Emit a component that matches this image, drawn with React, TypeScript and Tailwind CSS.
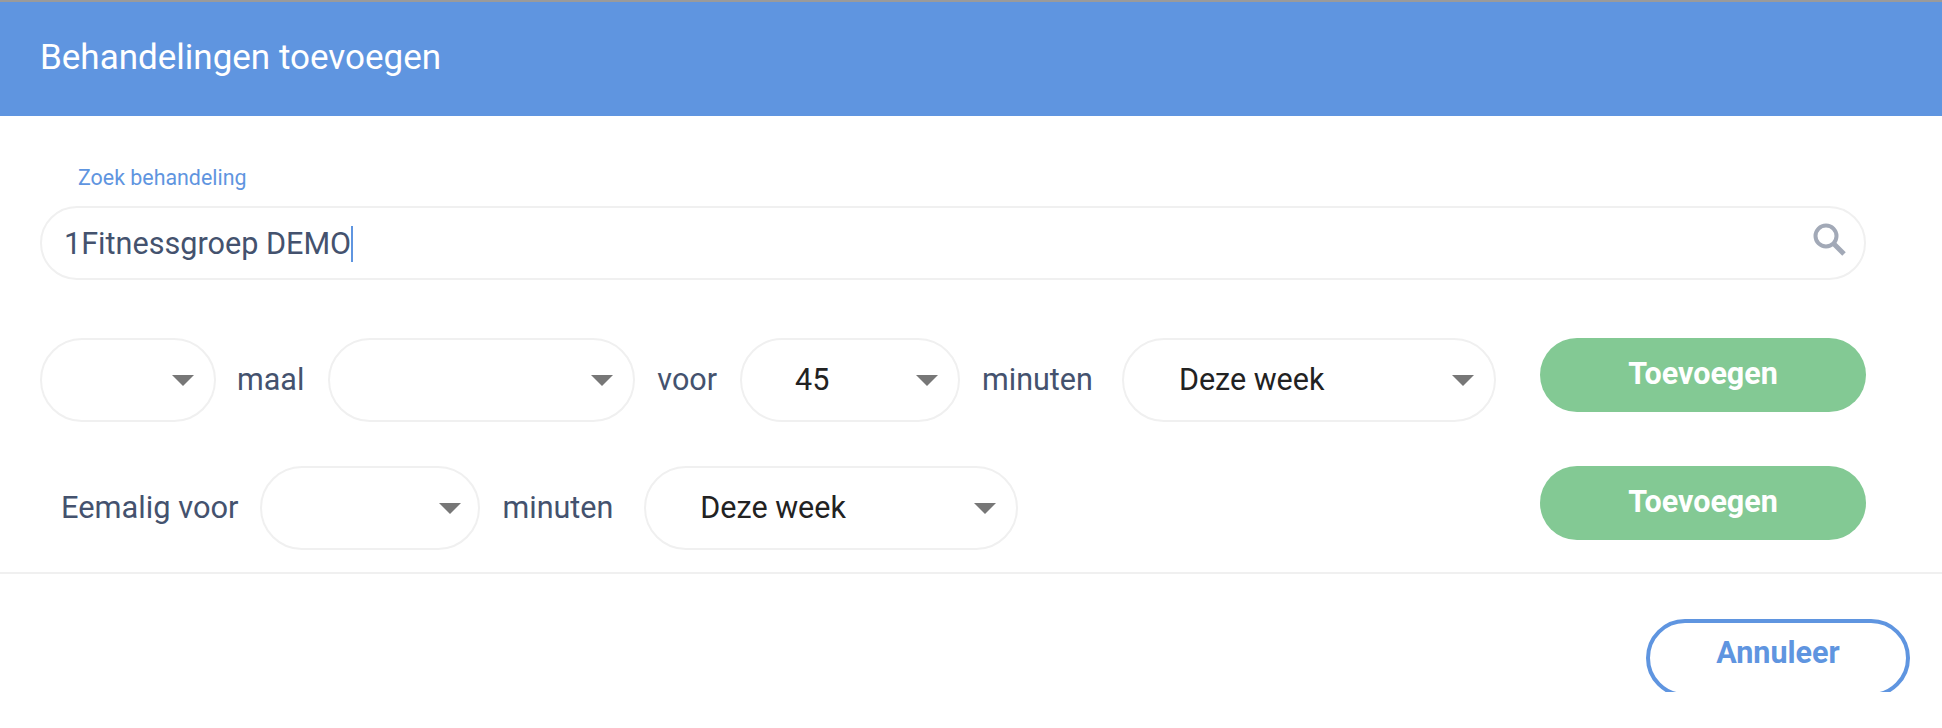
import React from "react";

function Caret() {
  return (
    <svg width="22" height="11" viewBox="0 0 22 11" className="shrink-0">
      <path d="M0 0H22L11 11Z" fill="#777777" />
    </svg>
  );
}

function Select({ className, value }: { className: string; value?: string }) {
  return (
    <div className={`h-[84px] shrink-0 rounded-[42px] border-2 border-[#f0f0f0] bg-white flex items-center justify-between ${className}`}>
      <span className="text-[30.5px] text-[#222222]">{value}</span>
      <Caret />
    </div>
  );
}

function Label({ children, className }: { children: React.ReactNode; className: string }) {
  return <span className={`h-[84px] flex items-center shrink-0 text-[30.5px] text-[#44526e] ${className}`}>{children}</span>;
}

function AddButton() {
  return (
    <button className="ml-auto w-[326px] h-[74px] rounded-[37px] bg-[#83c994] text-white text-[30.5px] font-bold pb-[2px]">
      Toevoegen
    </button>
  );
}

export default function App() {
  return (
    <div className="w-[1942px] h-[728px] bg-white overflow-hidden font-['Roboto',sans-serif]">
      <div className="h-[2px] bg-[#9a9a9a]" />
      <header className="h-[114px] bg-[#5f95e0] flex items-center pl-[40px]">
        <h1 className="text-[35px] font-normal text-white pb-[2px]">Behandelingen toevoegen</h1>
      </header>

      <main className="pl-[40px] pr-[76px]">
        <label className="block pl-[38px] pt-[48px] h-[90px] text-[21.4px] leading-[28px] text-[#5f95e0]">Zoek behandeling</label>
        <div className="h-[74px] rounded-[37px] border-2 border-[#f0f0f0] flex items-center justify-between pl-[22px] pr-[16px]">
          <div className="flex items-center text-[30.6px] text-[#44526e] pt-[2px]">
            <span>1Fitnessgroep DEMO</span>
            <span className="w-[2px] h-[36px] bg-[#5f95e0]" />
          </div>
          <svg width="36" height="36" viewBox="0 0 36 36" className="shrink-0 mb-[7px]">
            <circle cx="14" cy="14" r="10.5" fill="none" stroke="#a2a9b7" strokeWidth="4" />
            <path d="M22 22L32 32" stroke="#a2a9b7" strokeWidth="5" />
          </svg>
        </div>

        <div className="flex items-start mt-[58px]">
          <Select className="w-[176px] pr-[20px]" />
          <Label className="ml-[21px]">maal</Label>
          <Select className="w-[307px] ml-[24px] pr-[20px]" />
          <Label className="ml-[22px]">voor</Label>
          <Select className="w-[220px] ml-[23px] pl-[53px] pr-[20px]" value="45" />
          <Label className="ml-[22px]">minuten</Label>
          <Select className="w-[374px] ml-[29px] pl-[55px] pr-[20px]" value="Deze week" />
          <AddButton />
        </div>

        <div className="flex items-start mt-[44px]">
          <Label className="ml-[21px] text-[30.8px]">Eemalig voor</Label>
          <Select className="w-[220px] ml-[22px] pr-[17px]" />
          <Label className="ml-[22px]">minuten</Label>
          <Select className="w-[374px] ml-[31px] pl-[54px] pr-[20px]" value="Deze week" />
          <AddButton />
        </div>
      </main>

      <div className="h-[2px] bg-[#f0f0f0] mt-[22px]" />

      <footer className="h-[73px] mt-[45px] overflow-hidden flex justify-end pr-[32px]">
        <button className="w-[264px] h-[78px] shrink-0 rounded-[39px] border-4 border-[#5f95e0] bg-white text-[#5f95e0] text-[30.5px] font-bold pb-[10px]">
          Annuleer
        </button>
      </footer>
    </div>
  );
}
